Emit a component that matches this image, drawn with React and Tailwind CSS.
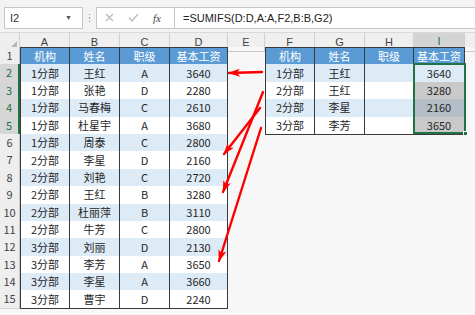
import React from "react";

const GRID = "grid grid-cols-[20px_50px_50px_50px_58px_37px_50px_50px_49px_51px_1fr]";
const LETTERS = ["A", "B", "C", "D", "E", "F", "G", "H", "I"];

const left = [
  ["机构", "姓名", "职级", "基本工资"],
  ["1分部", "王红", "A", "3640"],
  ["1分部", "张艳", "D", "2280"],
  ["1分部", "马春梅", "C", "2610"],
  ["1分部", "杜星宇", "A", "3680"],
  ["1分部", "周泰", "C", "2800"],
  ["2分部", "李星", "D", "2160"],
  ["2分部", "刘艳", "C", "2720"],
  ["2分部", "王红", "B", "3280"],
  ["2分部", "杜丽萍", "B", "3110"],
  ["2分部", "牛芳", "C", "2800"],
  ["3分部", "刘丽", "D", "2130"],
  ["3分部", "李芳", "A", "3650"],
  ["3分部", "李星", "A", "3660"],
  ["3分部", "曹宇", "D", "2240"],
];

const right = [
  ["机构", "姓名", "职级", "基本工资"],
  ["1分部", "王红", "", "3640"],
  ["2分部", "王红", "", "3280"],
  ["2分部", "李星", "", "2160"],
  ["3分部", "李芳", "", "3650"],
];

// selection tint on I3:I5
const selFill = { 3: "bg-[#c9c9c9]", 4: "bg-[#b5bdc8]", 5: "bg-[#c9c9c9]" };

function Cell({ text, row, first, fill }) {
  const base = "flex items-center justify-center border-b border-r border-[#3a3a3a] leading-none";
  const bg = fill ? fill : row === 1 ? "bg-[#5b9bd5] text-white" : row % 2 === 0 ? "bg-[#ddebf7] text-[#262626]" : "bg-white text-[#262626]";
  return (
    <div className={`${base} ${bg} ${first ? "border-l" : ""} ${row === 1 ? "border-t" : ""}`}>
      {text}
    </div>
  );
}

function SheetRow({ row }) {
  const selected = row >= 2 && row <= 5;
  const l = left[row - 1];
  const r = right[row - 1];
  return (
    <div className={`${GRID} h-[17.4px]`}>
      <div
        className={`flex items-end justify-center pb-[1px] border-b border-[#d4d4d4] ${
          selected ? "bg-[#d6d6d6] text-[#217346] border-r-2 border-r-[#217346]" : "bg-[#eeeeee] text-[#444] border-r border-r-[#c8c8c8]"
        }`}
      >
        {row}
      </div>
      {l.map((t, i) => (
        <Cell key={i} text={t} row={row} first={i === 0} />
      ))}
      <div />
      {r ? (
        r.map((t, i) => (
          <Cell key={i} text={t} row={row} first={i === 0} fill={i === 3 && selFill[row] ? `${selFill[row]} text-[#262626]` : null} />
        ))
      ) : (
        <>
          <div />
          <div />
          <div />
          <div />
        </>
      )}
      <div />
    </div>
  );
}

function Arrows() {
  return (
    <svg className="pointer-events-none absolute left-0 top-0" width="475" height="315">
      <defs>
        <marker id="head" viewBox="0 0 12 8" refX="11" refY="4" markerWidth="5" markerHeight="3.4" orient="auto">
          <path d="M0,0 L12,4 L0,8 L3,4 Z" fill="#ff0000" />
        </marker>
      </defs>
      <g stroke="#ff0000" strokeWidth="2.4" strokeLinecap="round" markerEnd="url(#head)">
        <line x1="262" y1="72" x2="229" y2="73" />
        <line x1="263" y1="92" x2="223" y2="192" />
        <line x1="260" y1="108" x2="224" y2="154" />
        <line x1="261" y1="128" x2="219" y2="261" />
      </g>
    </svg>
  );
}

export default function App() {
  return (
    <div className="relative h-[315px] w-[475px] overflow-hidden bg-[#f7f7f7] font-['Noto_Sans_CJK_SC',sans-serif] text-[11px]">
      {/* formula bar */}
      <div className="flex h-[33px] items-start gap-0 border-b border-[#d9d9d9] bg-[#f3f3f3] pt-[7px] font-['Liberation_Sans',sans-serif]">
        <div className="ml-[4px] flex h-[22px] w-[79px] items-center justify-between border border-[#c6c6c6] bg-white pl-[5px] pr-[10px] text-[#333]">
          <span>I2</span>
          <span className="text-[7px] text-[#555]">▼</span>
        </div>
        <div className="flex h-[22px] w-[13px] flex-col items-center justify-center gap-[2px]">
          <span className="h-[1.5px] w-[1.5px] bg-[#999]" />
          <span className="h-[1.5px] w-[1.5px] bg-[#999]" />
          <span className="h-[1.5px] w-[1.5px] bg-[#999]" />
        </div>
        <div className="flex h-[22px] w-[78px] items-center border border-r-0 border-[#c6c6c6] bg-white">
          <svg width="78" height="20" className="block">
            <g stroke="#b9b9b9" strokeWidth="1.2" fill="none">
              <path d="M9 6 L16 13 M16 6 L9 13" />
              <path d="M32 9.5 L35 13 L41 6" />
            </g>
            <text x="56" y="14" fontFamily="Liberation Serif, serif" fontStyle="italic" fontSize="11" fill="#444">fx</text>
          </svg>
        </div>
        <div className="flex h-[22px] flex-1 items-center border border-r-0 border-[#c6c6c6] bg-white pl-[8px] text-[#222]">
          =SUMIFS(D:D,A:A,F2,B:B,G2)
        </div>
      </div>

      {/* column headers */}
      <div className={`${GRID} h-[14px] bg-[#efefef] text-[#444] font-['Liberation_Sans',sans-serif]`}>
        <div className="relative border-r border-b border-[#d0d0d0]">
          <svg className="absolute right-[2px] bottom-[2px]" width="8" height="8">
            <path d="M8 0 L8 8 L0 8 Z" fill="#b5b5b5" />
          </svg>
        </div>
        {LETTERS.map((c) => (
          <div
            key={c}
            className={`flex items-center justify-center border-r border-[#d0d0d0] ${
              c === "I" ? "bg-[#d4d4d4] text-[#217346] border-b-2 border-b-[#217346]" : "border-b border-b-[#c8c8c8]"
            }`}
          >
            {c}
          </div>
        ))}
        <div className="border-b border-[#c8c8c8]" />
      </div>

      {/* sheet rows */}
      <div className="relative">
        {left.map((_, i) => (
          <SheetRow key={i} row={i + 1} />
        ))}
        {/* selection I2:I5 */}
        <div className="pointer-events-none absolute left-[413px] top-[16.4px] h-[71px] w-[53px] border-2 border-[#217346]">
          <div className="absolute -bottom-[4px] -right-[4px] h-[5px] w-[5px] border border-white bg-[#217346]" />
        </div>
      </div>

      <Arrows />
    </div>
  );
}
